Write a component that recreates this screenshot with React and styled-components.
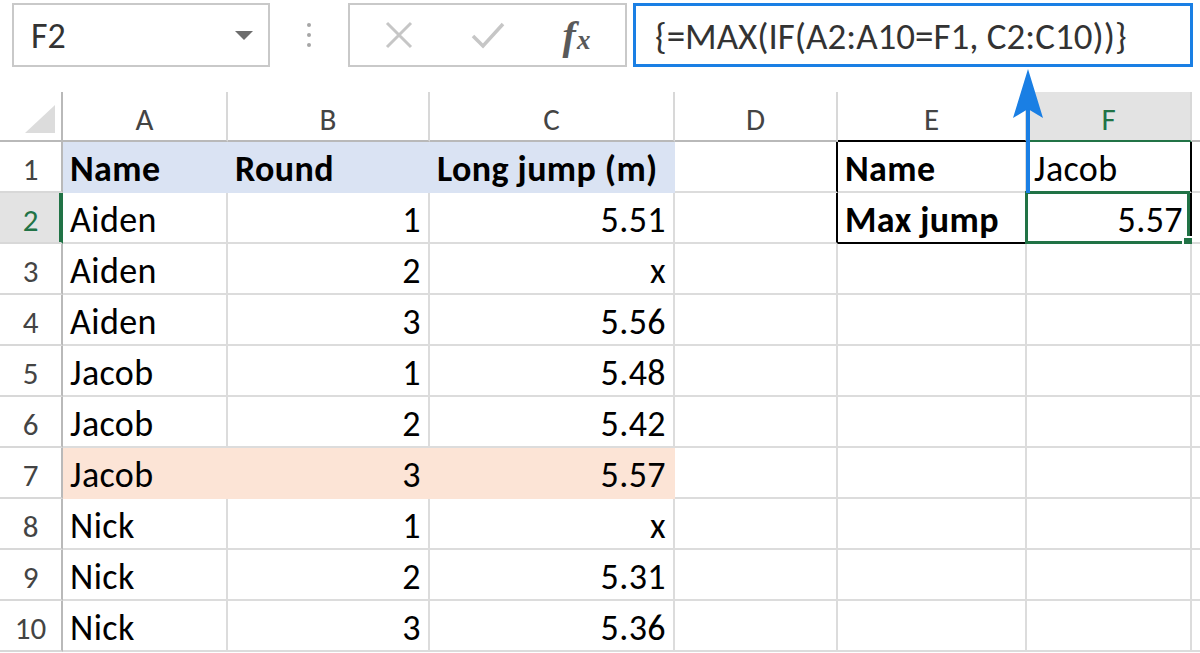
import React from 'react';
import styled, { createGlobalStyle } from 'styled-components';

const FONT = `Carlito, Lato, "Open Sans", sans-serif`;
const GRID = '#dcdcdc';
const HEAD_LINE = '#b9b9b9';
const GREEN = '#217346';
const BLUE = '#1a7fe4';

const GlobalStyle = createGlobalStyle`
  html, body { margin: 0; padding: 0; background: #fff; }
  body { width: 1200px; height: 653px; overflow: hidden; font-family: ${FONT}; }
  *, *::before, *::after { box-sizing: border-box; }
`;

const Page = styled.div`
  position: relative;
  width: 1200px;
  height: 653px;
  overflow: hidden;
  background: #fff;
`;

const Toolbar = styled.div`
  display: flex;
  align-items: flex-start;
  height: 92px;
  padding: 3px 0 0 12px;
`;

const NameBox = styled.div`
  width: 258px;
  height: 64px;
  border: 2px solid #c9c9c9;
  display: flex;
  align-items: center;
  justify-content: space-between;
  padding: 0 15px 0 17px;
`;

const NameText = styled.span`
  font-size: 36px;
  line-height: 1;
  color: #333;
  padding-top: 2px;
`;

const DropArrow = styled.span`
  width: 0;
  height: 0;
  border-left: 9px solid transparent;
  border-right: 9px solid transparent;
  border-top: 9px solid #6d6d6d;
`;

const Grip = styled.div`
  width: 78px;
  display: flex;
  flex-direction: column;
  align-items: center;
  gap: 6px;
  padding-top: 20px;
`;

const GripDot = styled.span`
  width: 4px;
  height: 4px;
  border-radius: 50%;
  background: #a6a6a6;
`;

const ActionBox = styled.div`
  width: 279px;
  height: 64px;
  border: 2px solid #c9c9c9;
  display: grid;
  grid-template-columns: repeat(3, 1fr);
  align-items: center;
  justify-items: center;
  padding: 0 4px;
`;

const Fx = styled.span`
  font-family: "Liberation Serif", "DejaVu Serif", serif;
  font-style: italic;
  font-weight: bold;
  color: #595959;
  line-height: 1;
  display: inline-flex;
  align-items: baseline;
  padding-top: 2px;
`;

const FxF = styled.span`
  font-size: 40px;
`;

const FxX = styled.span`
  font-size: 27px;
  margin-left: 1px;
`;

const FormulaBox = styled.div`
  margin-left: 6px;
  width: 560px;
  height: 64px;
  border: 3px solid ${BLUE};
  display: flex;
  align-items: center;
  padding: 2px 0 0 19px;
  font-size: 37px;
  line-height: 1;
  color: #333;
  white-space: nowrap;
`;

const Sheet = styled.div`
  display: grid;
  grid-template-columns: 63px 165px 202px 245px 163px 189px 165px 8px;
  grid-template-rows: 50px repeat(10, 51px);
`;

const Corner = styled.div`
  border-right: 2px solid ${HEAD_LINE};
  border-bottom: 2px solid ${HEAD_LINE};
  display: flex;
  align-items: flex-end;
  justify-content: flex-end;
  padding: 0 6px 7px 0;
`;

const CornerTriangle = styled.span`
  width: 0;
  height: 0;
  border-left: 30px solid transparent;
  border-bottom: 28px solid #dcdcdc;
`;

const ColHeader = styled.div`
  border-right: ${(p) => (p.$last ? '0' : `2px solid #d8d8d8`)};
  border-bottom: 2px solid ${(p) => p.$bottom || HEAD_LINE};
  background: ${(p) => (p.$sel ? '#e3e3e3' : '#fff')};
  color: ${(p) => (p.$sel ? GREEN : '#444')};
  font-size: 31px;
  line-height: 1;
  display: flex;
  align-items: flex-end;
  justify-content: center;
  padding-bottom: 5px;
`;

const RowHeader = styled.div`
  border-right: 2px solid ${(p) => (p.$sel ? GREEN : HEAD_LINE)};
  border-bottom: 2px solid #d8d8d8;
  background: ${(p) => (p.$sel ? '#e3e3e3' : '#fff')};
  box-shadow: ${(p) => (p.$sel ? `inset -2px 0 0 ${GREEN}` : 'none')};
  color: ${(p) => (p.$sel ? GREEN : '#444')};
  font-size: 31px;
  line-height: 1;
  display: flex;
  align-items: flex-end;
  justify-content: center;
  padding-bottom: 6px;
`;

const Cell = styled.div`
  position: relative;
  border-right: ${(p) => (p.$last ? '0' : `2px solid ${p.$r || p.$fill || GRID}`)};
  border-bottom: 2px solid ${(p) => p.$b || p.$fill || GRID};
  background: ${(p) => p.$fill || '#fff'};
  font-size: 36px;
  letter-spacing: 0.4px;
  line-height: 1;
  font-weight: ${(p) => (p.$bold ? 700 : 400)};
  color: #000;
  display: flex;
  align-items: flex-end;
  justify-content: ${(p) => (p.$right ? 'flex-end' : 'flex-start')};
  padding: 0 7px 4px 7px;
  white-space: nowrap;
`;

const SelectionFrame = styled.div`
  position: absolute;
  left: -2px;
  top: -2px;
  right: 0;
  bottom: -2px;
  border: 3px solid ${GREEN};
  pointer-events: none;
`;

const FillHandle = styled.span`
  position: absolute;
  right: -8px;
  bottom: -8px;
  width: 13px;
  height: 13px;
  background: ${GREEN};
  border: 2px solid #fff;
`;

const ArrowSvg = styled.svg`
  position: absolute;
  left: 1010px;
  top: 66px;
  overflow: visible;
`;

const BLUE_FILL = '#dae3f3';
const ORANGE_FILL = '#fce4d6';

const data = [
  ['Aiden', '1', '5.51'],
  ['Aiden', '2', 'x'],
  ['Aiden', '3', '5.56'],
  ['Jacob', '1', '5.48'],
  ['Jacob', '2', '5.42'],
  ['Jacob', '3', '5.57'],
  ['Nick', '1', 'x'],
  ['Nick', '2', '5.31'],
  ['Nick', '3', '5.36'],
];

function CrossIcon() {
  return (
    <svg width="28" height="28" viewBox="0 0 28 28">
      <path d="M2 2 L26 26 M26 2 L2 26" stroke="#c6c6c6" strokeWidth="3" fill="none" />
    </svg>
  );
}

function CheckIcon() {
  return (
    <svg width="34" height="27" viewBox="0 0 34 27">
      <path d="M2 14 L12 24 L32 2" stroke="#c6c6c6" strokeWidth="3.5" fill="none" strokeLinejoin="miter" />
    </svg>
  );
}

export default function App() {
  return (
    <Page>
      <GlobalStyle />
      <Toolbar>
        <NameBox>
          <NameText>F2</NameText>
          <DropArrow />
        </NameBox>
        <Grip>
          <GripDot />
          <GripDot />
          <GripDot />
        </Grip>
        <ActionBox>
          <CrossIcon />
          <CheckIcon />
          <Fx>
            <FxF>f</FxF>
            <FxX>x</FxX>
          </Fx>
        </ActionBox>
        <FormulaBox>{'{=MAX(IF(A2:A10=F1, C2:C10))}'}</FormulaBox>
      </Toolbar>

      <Sheet>
        <Corner>
          <CornerTriangle />
        </Corner>
        <ColHeader>A</ColHeader>
        <ColHeader>B</ColHeader>
        <ColHeader>C</ColHeader>
        <ColHeader>D</ColHeader>
        <ColHeader $bottom="#000">E</ColHeader>
        <ColHeader $sel $bottom={GREEN}>F</ColHeader>
        <ColHeader $last />

        <RowHeader>1</RowHeader>
        <Cell $bold $fill={BLUE_FILL}>Name</Cell>
        <Cell $bold $fill={BLUE_FILL}>Round</Cell>
        <Cell $bold $fill={BLUE_FILL}>Long jump (m)</Cell>
        <Cell $r="#000" />
        <Cell $bold>Name</Cell>
        <Cell $r="#000">Jacob</Cell>
        <Cell $last />

        {data.map((row, i) => {
          const n = i + 2;
          const fill = n === 7 ? ORANGE_FILL : undefined;
          return (
            <React.Fragment key={n}>
              <RowHeader $sel={n === 2}>{n}</RowHeader>
              <Cell $fill={fill}>{row[0]}</Cell>
              <Cell $fill={fill} $right>{row[1]}</Cell>
              <Cell $fill={fill} $right>{row[2]}</Cell>
              <Cell $r={n === 2 ? '#000' : undefined} />
              {n === 2 ? (
                <>
                  <Cell $bold $b="#000">Max jump</Cell>
                  <Cell $right $r="#000" $b="#000">
                    5.57
                    <SelectionFrame>
                      <FillHandle />
                    </SelectionFrame>
                  </Cell>
                </>
              ) : (
                <>
                  <Cell />
                  <Cell />
                </>
              )}
              <Cell $last />
            </React.Fragment>
          );
        })}
      </Sheet>

      <ArrowSvg width="36" height="128" viewBox="0 0 36 128">
        <line x1="18" y1="40" x2="18" y2="127" stroke={BLUE} strokeWidth="4" />
        <path d="M18 3 L33 52 L18 43 L3 52 Z" fill={BLUE} />
      </ArrowSvg>
    </Page>
  );
}
